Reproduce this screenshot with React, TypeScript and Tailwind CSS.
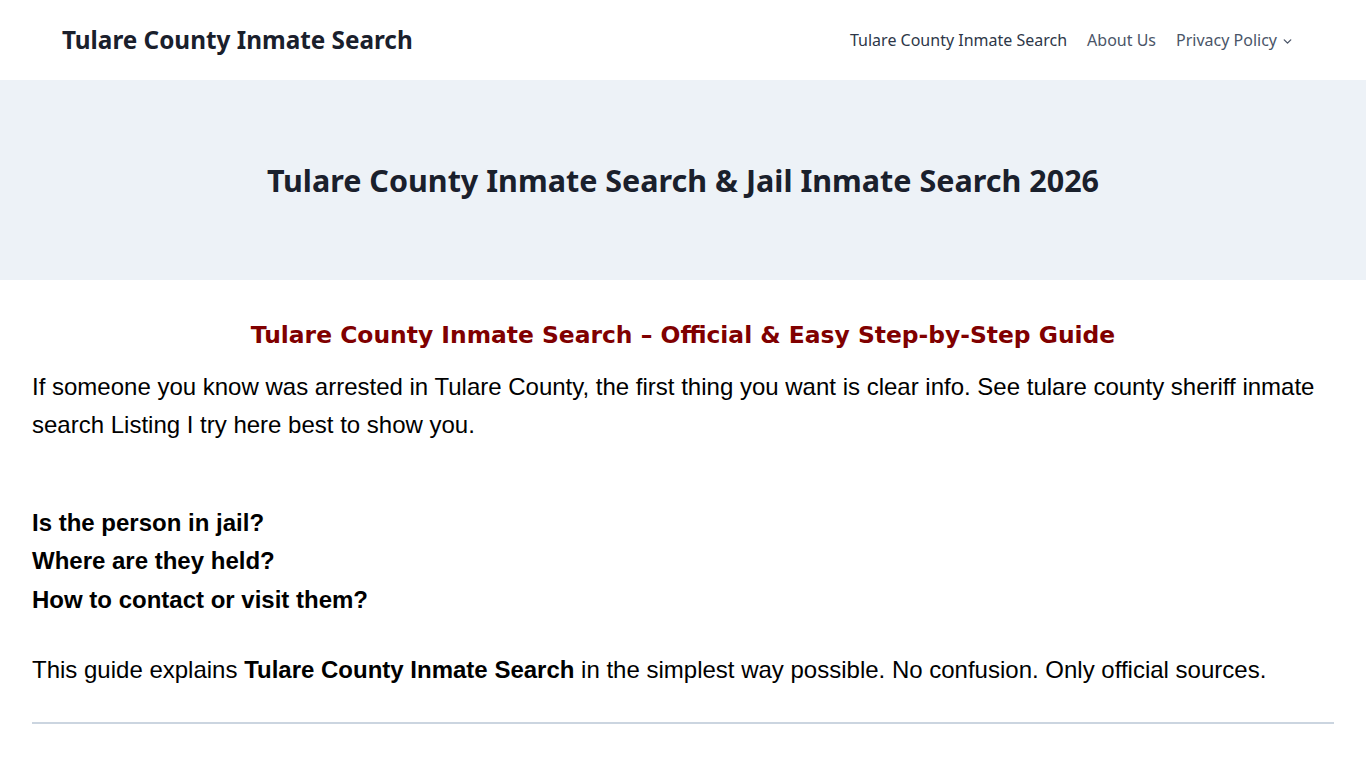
import { ChevronDown } from 'lucide-react';

const ui = "font-['Noto_Sans',sans-serif]";
const arial = "font-['Liberation_Sans',Arial,sans-serif]";

export default function App() {
  return (
    <div className="min-h-screen bg-white">
      {/* Cabecera */}
      <header className={`h-20 flex items-center justify-between pl-[62px] pr-[72px] ${ui}`}>
        <a className="text-[24.3px] font-bold text-[#1a202c]">Tulare County Inmate Search</a>
        <nav className="flex items-center gap-5 text-[16px]">
          <a className="text-[#2d3748]">Tulare County Inmate Search</a>
          <a className="text-[#4a5568]">About Us</a>
          <a className="flex items-center gap-1 text-[#4a5568]">
            Privacy Policy
            <ChevronDown size={13} strokeWidth={2.5} className="mt-[2px]" />
          </a>
        </nav>
      </header>

      {/* Hero */}
      <section className={`h-[200px] bg-[#edf2f7] flex items-center justify-center ${ui}`}>
        <h1 className="text-[30.5px] font-bold text-[#1a202c] mt-[2px]">
          Tulare County Inmate Search &amp; Jail Inmate Search 2026
        </h1>
      </section>

      {/* Contenido */}
      <main className={`px-8 pt-[40px] text-black ${arial}`}>
        <h2 className="text-center text-[23.4px] font-bold text-[#800000] leading-[30px] font-['DejaVu_Sans',sans-serif]">
          Tulare County Inmate Search – Official &amp; Easy Step-by-Step Guide
        </h2>
        <p className="mt-[18px] text-[24px] leading-[38.4px]">
          If someone you know was arrested in Tulare County, the first thing you want is clear info. See tulare county sheriff inmate search Listing I try here best to show you.
        </p>
        <p className="mt-[59px] text-[24px] leading-[38.4px] font-bold">
          Is the person in jail?
          <br />
          Where are they held?
          <br />
          How to contact or visit them?
        </p>
        <p className="mt-[32px] text-[24px] leading-[38.4px]">
          This guide explains <strong>Tulare County Inmate Search</strong> in the simplest way possible. No confusion. Only official sources.
        </p>
        <hr className="mt-[33px] border-t-2 border-[#cbd5e0]" />
      </main>
    </div>
  );
}
